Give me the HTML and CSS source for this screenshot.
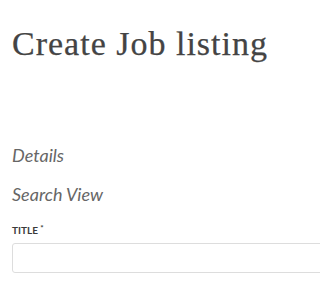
FILE: index.html
```
<!DOCTYPE html>
<html lang="en">
<head>
<meta charset="utf-8">
<link rel="stylesheet" href="styles.css">
</head>
<body>
<main class="page">
  <h1 class="title">Create Job listing</h1>
  <h2 class="section">Details</h2>
  <h2 class="section section-search">Search View</h2>
  <div class="field">
    <label class="label" for="title">TITLE <span class="req">*</span></label>
    <input class="input" id="title" type="text">
  </div>
</main>
</body>
</html>
```
FILE: styles.css
```
html, body {
  margin: 0;
  padding: 0;
  background: #fff;
  overflow: hidden;
}
.page {
  padding: 24px 0 0 12px;
  overflow: hidden;
}
.title {
  margin: 0;
  font-family: "Liberation Serif", "Times New Roman", serif;
  font-weight: normal;
  font-size: 34px;
  line-height: 40px;
  letter-spacing: 1px;
  color: #444;
  -webkit-text-stroke: 0.25px #444;
  white-space: nowrap;
}
.section {
  margin: 80px 0 0 0;
  font-family: Lato, "Noto Sans", sans-serif;
  font-style: italic;
  font-weight: normal;
  font-size: 18px;
  line-height: 22px;
  color: #666;
}
.section-search {
  margin-top: 17px;
}
.field {
  margin-top: 19px;
  margin-right: -40px;
}
.label {
  display: block;
  font-family: Lato, "Noto Sans", sans-serif;
  font-weight: bold;
  font-size: 10px;
  line-height: 12px;
  color: #3a3a3a;
}
.req {
  font-size: 8px;
  vertical-align: top;
  line-height: 9px;
}
.input {
  display: block;
  box-sizing: border-box;
  margin-top: 7px;
  width: 100%;
  height: 30px;
  border: 1px solid #ddd;
  border-radius: 3px;
  background: #fff;
  outline: none;
}
```
